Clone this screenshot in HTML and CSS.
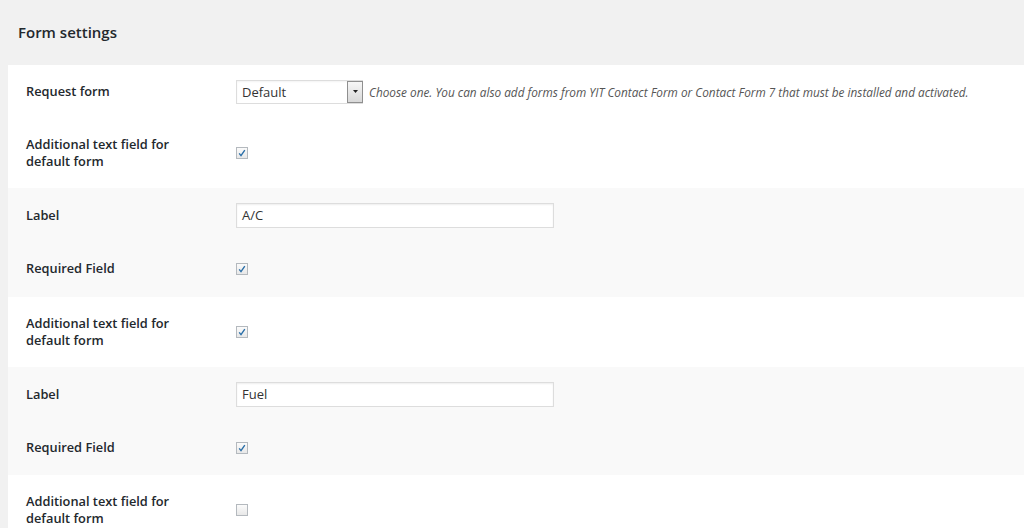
FILE: index.html
```html
<!DOCTYPE html>
<html>
<head>
<meta charset="utf-8">
<link rel="stylesheet" href="styles.css">
</head>
<body>
<h2 class="title">Form settings</h2>
<div class="panel">
  <div class="group white">
    <div class="row">
      <div class="th">Request form</div>
      <div class="td">
        <div class="select"><span class="sel-val">Default</span><span class="sel-btn"><svg width="5" height="3" viewBox="0 0 5 3"><path d="M0 0h5L2.5 3z" fill="#222"/></svg></span></div>
        <span class="desc">Choose one. You can also add forms from YIT Contact Form or Contact Form 7 that must be installed and activated.</span>
      </div>
    </div>
    <div class="row tall">
      <div class="th">Additional text field for default form</div>
      <div class="td"><span class="cb checked"><svg viewBox="0 0 12 12" width="12" height="12"><path d="M3.2 6.4l1.8 2.2 3.8-5.4" fill="none" stroke="#2a6fa8" stroke-width="1.4"/></svg></span></div>
    </div>
  </div>
  <div class="group gray first">
    <div class="row">
      <div class="th">Label</div>
      <div class="td"><div class="input">A/C</div></div>
    </div>
    <div class="row">
      <div class="th">Required Field</div>
      <div class="td"><span class="cb checked"><svg viewBox="0 0 12 12" width="12" height="12"><path d="M3.2 6.4l1.8 2.2 3.8-5.4" fill="none" stroke="#2a6fa8" stroke-width="1.4"/></svg></span></div>
    </div>
  </div>
  <div class="group white">
    <div class="row tall">
      <div class="th">Additional text field for default form</div>
      <div class="td"><span class="cb checked"><svg viewBox="0 0 12 12" width="12" height="12"><path d="M3.2 6.4l1.8 2.2 3.8-5.4" fill="none" stroke="#2a6fa8" stroke-width="1.4"/></svg></span></div>
    </div>
  </div>
  <div class="group gray">
    <div class="row">
      <div class="th">Label</div>
      <div class="td"><div class="input">Fuel</div></div>
    </div>
    <div class="row">
      <div class="th">Required Field</div>
      <div class="td"><span class="cb checked"><svg viewBox="0 0 12 12" width="12" height="12"><path d="M3.2 6.4l1.8 2.2 3.8-5.4" fill="none" stroke="#2a6fa8" stroke-width="1.4"/></svg></span></div>
    </div>
  </div>
  <div class="group white">
    <div class="row tall">
      <div class="th">Additional text field for default form</div>
      <div class="td"><span class="cb"></span></div>
    </div>
  </div>
</div>
</body>
</html>
```
FILE: styles.css
```css
html, body { margin: 0; padding: 0; }
body {
  background: #f1f1f1;
  font-family: "Open Sans", "Liberation Sans", sans-serif;
  color: #222;
  width: 1024px;
  height: 528px;
  overflow: hidden;
}
.title {
  margin: 0;
  padding: 23px 0 0 18px;
  height: 42px;
  font-size: 15px;
  font-weight: 600;
  line-height: 18px;
  color: #23282d;
}
.panel {
  margin-left: 8px;
  background: #fff;
}
.group.gray { background: #f9f9f9; padding: 1px 0 1px; }
.group.gray.first { padding-bottom: 2px; }
.group.white { background: #fff; }
.row {
  display: flex;
  align-items: center;
  height: 53px;
}
.row.tall { height: 70px; }
.th {
  width: 160px;
  padding-left: 18px;
  margin-right: 50px;
  font-size: 12.8px;
  font-weight: 600;
  line-height: 17px;
  color: #23282d;
}
.td {
  display: flex;
  align-items: center;
}
.select {
  width: 127px;
  height: 24px;
  box-sizing: border-box;
  border: 1px solid #ddd;
  background: #fff;
  display: flex;
  align-items: center;
  justify-content: space-between;
  box-shadow: inset 0 1px 2px rgba(0,0,0,.05);
}
.sel-val {
  font-size: 13px;
  padding-left: 5px;
  color: #333;
}
.sel-btn {
  width: 16px;
  height: 22px;
  box-sizing: border-box;
  border: 1px solid #8f8f8f;
  background: linear-gradient(#f6f6f6, #d8d8d8);
  display: flex;
  align-items: center;
  justify-content: center;
  margin-right: -1px;
}
.desc {
  margin-left: 6px;
  font-size: 11.8px;
  font-style: italic;
  color: #555;
}
.input {
  width: 318px;
  height: 25px;
  box-sizing: border-box;
  border: 1px solid #ddd;
  background: #fff;
  box-shadow: inset 0 1px 2px rgba(0,0,0,.07);
  font-size: 13px;
  line-height: 23px;
  padding-left: 5px;
  color: #333;
}
.cb {
  display: inline-block;
  width: 12px;
  height: 12px;
  box-sizing: border-box;
  border: 1px solid #b4b9be;
  background: linear-gradient(#fbfbfb, #e8e8e8);
  position: relative;
}
.cb svg { position: absolute; left: -1px; top: -1px; }
```
